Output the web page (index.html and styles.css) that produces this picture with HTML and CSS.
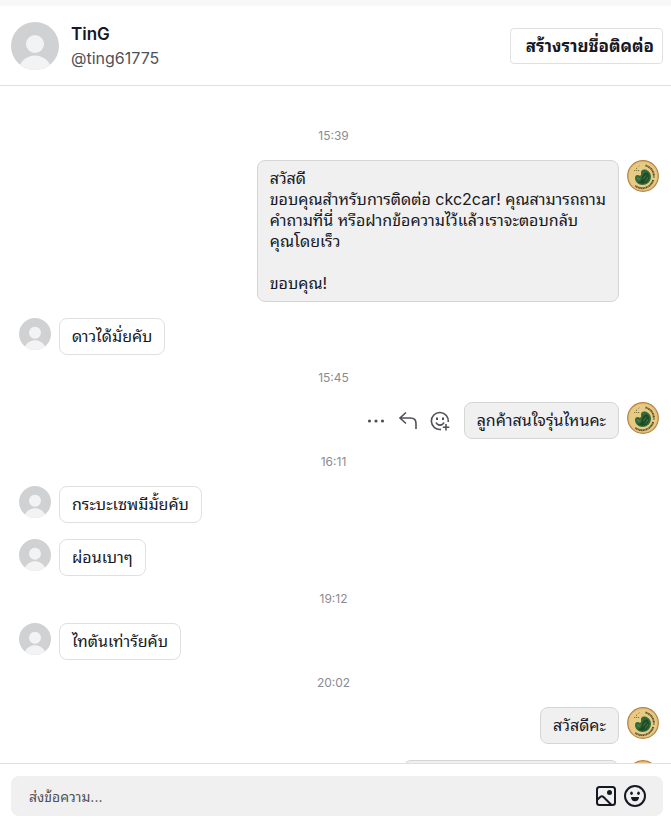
FILE: index.html
```html
<!DOCTYPE html>
<html lang="th">
<head>
<meta charset="utf-8">
<meta name="viewport" content="width=device-width, initial-scale=1">
<title>TinG</title>
<link rel="stylesheet" href="styles.css">
</head>
<body>
<svg class="sprite" aria-hidden="true">
  <symbol id="person" viewBox="0 0 48 48">
    <circle cx="24" cy="24" r="24" fill="#d0d1d3"/>
    <circle cx="24" cy="22" r="9" fill="#f3f3f4"/>
    <path d="M9 42.700C12 37 17.500 33.500 24 33.500S36 37 39 42.700A24 24 0 0 1 9 42.700Z" fill="#f3f3f4"/>
  </symbol>
  <symbol id="shop" viewBox="0 0 32 32">
    <circle cx="16" cy="16" r="15.300" fill="#e2c47a" stroke="#b98145" stroke-width="1.200"/>
    <circle cx="16" cy="16" r="13.600" fill="#e6cb86"/>
    <path d="M8 18C8 15.500 10 14.500 12 15.500C13.500 16 14.500 15 14 13C13.800 10.500 15.500 9 18 9.500C21.500 10 24.500 13.500 24 17.500C23.500 22 20 25 15.500 25C11.500 25 8 22 8 18Z" fill="#35693a"/>
    <path d="M15 17C16 13.500 18 12 20 12.500C23 14 23 19 20 22C17 24.500 12.500 24 10.500 21.500C13 22.500 14.800 20.500 15 17Z" fill="#1c4c26"/>
    <path d="M10 18.500C11.500 17.500 12.500 18.500 12 20M16.500 19C17.500 17.500 18 16 19.500 15M18 21.500C19.500 20 20.500 18.500 21 17" fill="none" stroke="#809853" stroke-width=".6"/>
    <path d="M7 10.500H13M9.500 9V7.500M11.500 6.500L12.500 5.500" stroke="#86743e" stroke-width="1" stroke-dasharray="1.200 .8"/>
    <path d="M18.500 5.500A11 11 0 0 1 26.800 17.500" fill="none" stroke="#5b4b2c" stroke-width="1.900" stroke-dasharray="1.400 .4 .8 .4"/>
    <path d="M26.200 20A11.300 11.300 0 0 1 8 25.500" fill="none" stroke="#5b4b2c" stroke-width="1.900" stroke-dasharray="1.500 .4 .9 .4"/>
  </symbol>
</svg>

<header class="header">
  <svg class="avatar avatar-large" role="img" aria-label="TinG"><use href="#person"/></svg>
  <div class="identity">
    <h1 class="name">TinG</h1>
    <p class="handle">@ting61775</p>
  </div>
  <button class="create" type="button">สร้างรายชื่อติดต่อ</button>
</header>

<main class="chat">
  <time class="time">15:39</time>
  <div class="row row-out">
    <p class="bubble">สวัสดี
ขอบคุณสำหรับการติดต่อ ckc2car! คุณสามารถถาม
คำถามที่นี่ หรือฝากข้อความไว้แล้วเราจะตอบกลับ
คุณโดยเร็ว

ขอบคุณ!</p>
    <svg class="avatar" aria-hidden="true"><use href="#shop"/></svg>
  </div>
  <div class="row">
    <svg class="avatar" aria-hidden="true"><use href="#person"/></svg>
    <p class="bubble">ดาวได้มั่ยคับ</p>
  </div>
  <time class="time">15:45</time>
  <div class="row row-out">
    <div class="actions">
      <button class="icon-button" type="button" aria-label="เพิ่มเติม">
        <svg viewBox="0 0 20 20" fill="#505157"><circle cx="3.500" cy="10" r="1.600"/><circle cx="10" cy="10" r="1.600"/><circle cx="16.500" cy="10" r="1.600"/></svg>
      </button>
      <button class="icon-button" type="button" aria-label="ตอบกลับ">
        <svg viewBox="0 0 20 20" fill="none" stroke="#505157" stroke-width="1.600"><path d="M8 1.500L2 7L8 12.500M2 7H12.500Q18 7 18 12.500V18"/></svg>
      </button>
      <button class="icon-button" type="button" aria-label="แสดงความรู้สึก">
        <svg viewBox="0 0 20 20" fill="none" stroke="#505157" stroke-width="1.600"><path d="M18.300 11A8.500 8.500 0 1 0 11 18.400M6 11.500C7.500 15 12.500 15 14 11.500M16 13V19.500M12.800 16.300H19.300"/><path d="M7 6.500V9M13 6.500V9" stroke-width="2"/></svg>
      </button>
    </div>
    <p class="bubble">ลูกค้าสนใจรุ่นไหนคะ</p>
    <svg class="avatar" aria-hidden="true"><use href="#shop"/></svg>
  </div>
  <time class="time">16:11</time>
  <div class="row">
    <svg class="avatar" aria-hidden="true"><use href="#person"/></svg>
    <p class="bubble">กระบะเซพมีมั้ยคับ</p>
  </div>
  <div class="row">
    <svg class="avatar" aria-hidden="true"><use href="#person"/></svg>
    <p class="bubble">ผ่อนเบาๆ</p>
  </div>
  <time class="time">19:12</time>
  <div class="row">
    <svg class="avatar" aria-hidden="true"><use href="#person"/></svg>
    <p class="bubble">ไทตันเท่ารัยคับ</p>
  </div>
  <time class="time">20:02</time>
  <div class="row row-out">
    <p class="bubble">สวัสดีคะ</p>
    <svg class="avatar" aria-hidden="true"><use href="#shop"/></svg>
  </div>
  <div class="row row-out">
    <p class="bubble bubble-empty"></p>
    <svg class="avatar" aria-hidden="true"><use href="#shop"/></svg>
  </div>
</main>

<footer class="footer">
  <form class="composer">
    <input class="message" type="text" placeholder="ส่งข้อความ..." aria-label="ส่งข้อความ">
    <button class="tool" type="button" aria-label="รูปภาพ">
      <svg viewBox="0 0 24 24" fill="none" stroke="#161823" stroke-width="2"><rect x="3" y="3" width="18" height="18" rx="2.500"/><path d="M3 16L6.500 12.800Q8 11.500 9.500 13L17.500 21"/><circle cx="15.500" cy="8.500" r="2.500" fill="#161823" stroke="none"/></svg>
    </button>
    <button class="tool" type="button" aria-label="อีโมจิ">
      <svg viewBox="0 0 24 24" fill="#161823"><circle cx="12" cy="12" r="10" fill="none" stroke="#161823" stroke-width="2"/><ellipse cx="8.500" cy="9.300" rx="1.300" ry="1.800"/><ellipse cx="15.500" cy="9.300" rx="1.300" ry="1.800"/><path d="M8 13H16C16 15.700 14.300 17.300 12 17.300S8 15.700 8 13Z"/></svg>
    </button>
  </form>
</footer>
</body>
</html>
```
FILE: styles.css
```css
* {
  box-sizing: border-box;
}

body {
  margin: 0;
  height: 100vh;
  display: flex;
  flex-direction: column;
  overflow: hidden;
  background: #fff;
  color: #161823;
  font-family: "Inter", "Noto Sans Thai Looped", "Loma", "Noto Sans Thai", "Noto Sans", sans-serif;
  font-size: 16px;
  line-height: 21px;
}

button,
input {
  font: inherit;
  color: inherit;
}

h1,
p {
  margin: 0;
}

.sprite {
  position: absolute;
  width: 0;
  height: 0;
}

.header {
  flex: none;
  display: flex;
  align-items: center;
  gap: 12px;
  padding: 16px 8px 15px 11px;
  border-top: 6px solid #f8f8f8;
  border-bottom: 1px solid #e0e0e1;
}

.avatar {
  flex: none;
  width: 32px;
  height: 32px;
}

.avatar-large {
  width: 48px;
  height: 48px;
}

.identity {
  flex: 1;
}

.name {
  font-size: 17px;
  font-weight: 600;
  line-height: 24px;
}

.handle {
  line-height: 24px;
  color: #505157;
}

.create {
  height: 36px;
  padding: 0 8px 0 15px;
  border: 1px solid #e0e0e1;
  border-radius: 4px;
  background: #fff;
  font-size: 17px;
  font-weight: 700;
}

.chat {
  flex: 1;
  min-height: 0;
  overflow: hidden;
  padding: 27px 4px 0 0;
}

.time {
  display: block;
  padding: 14px 0 16px;
  text-align: center;
  font-size: 12px;
  line-height: 17px;
  color: #8a8b91;
}

.row {
  display: flex;
  align-items: flex-start;
  gap: 8px;
  padding: 0 8px 0 19px;
}

.row + .row {
  margin-top: 16px;
}

.row-out {
  justify-content: flex-end;
}

.bubble {
  padding: 7px 12px;
  border: 1px solid #e0e0e1;
  border-radius: 8px;
  white-space: pre;
}

.row-out .bubble {
  background: #f0f0f0;
  border-color: #d5d5d6;
}

.bubble-empty {
  width: 216px;
  height: 37px;
}

.actions {
  display: flex;
  align-self: center;
  gap: 12px;
  margin-right: 6px;
}

.icon-button,
.tool {
  flex: none;
  padding: 0;
  border: 0;
  background: none;
}

.icon-button {
  width: 20px;
  height: 20px;
}

.tool {
  width: 24px;
  height: 24px;
}

button svg {
  display: block;
}

.footer {
  flex: none;
  padding: 12px 8px 3px 11px;
  border-top: 1px solid #e0e0e1;
}

.composer {
  display: flex;
  align-items: center;
  gap: 5px;
  height: 40px;
  padding: 0 16px 0 18px;
  border-radius: 8px;
  background: #f0f0f0;
}

.message {
  flex: 1;
  min-width: 0;
  padding: 0;
  border: 0;
  outline: 0;
  background: none;
  font-size: 14px;
}

.message::placeholder {
  color: #505157;
  opacity: 1;
}
```
